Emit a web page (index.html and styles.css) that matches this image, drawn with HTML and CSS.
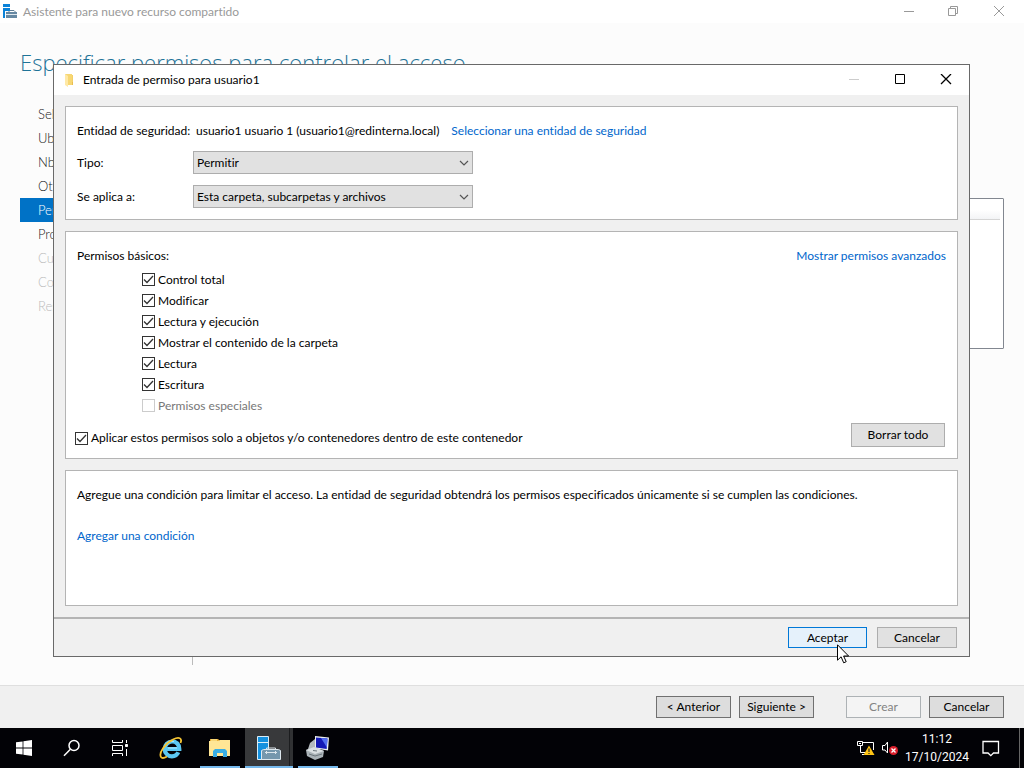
FILE: index.html
```html
<!DOCTYPE html>
<html lang="es">
<head>
<meta charset="utf-8">
<title>Asistente para nuevo recurso compartido</title>
<link rel="stylesheet" href="styles.css">
</head>
<body>
<div class="desktop">
  <main class="wizard">
    <header class="wizard-title">
      <svg class="app-icon" width="16" height="16" viewBox="0 0 16 16"><path fill="#0a82d8" d="M1 0h7v3H1zM1 4h7v3H3v7H1z"/><path fill="none" stroke="#5f7f98" d="M6 8.500l2-2h4l2 2"/><path fill="#6688a2" d="M4 8h11v6H4z"/><path stroke="#dfe8ee" d="M4 10.500h11"/></svg>
      <span class="wizard-name">Asistente para nuevo recurso compartido</span>
      <div class="window-controls">
        <button aria-label="Minimizar"><svg width="12" height="12"><path d="M1 5.500h10"/></svg></button>
        <button aria-label="Restaurar"><svg width="12" height="12"><path d="M.5 2.500h7v7h-7zM2.500 2.500v-2h7v7h-2"/></svg></button>
        <button aria-label="Cerrar"><svg width="12" height="12"><path d="M1 0l10 10M11 0l-10 10"/></svg></button>
      </div>
    </header>
    <div class="wizard-body">
      <h1>Especificar permisos para controlar el acceso</h1>
      <div class="wizard-content">
        <nav class="steps">
          <a href="#perfil">Seleccionar</a>
          <a href="#ubicacion">Ubicación</a>
          <a href="#nombre">Nbre.</a>
          <a href="#otra">Otra</a>
          <a href="#permisos" class="current">Permisos</a>
          <a href="#propiedades">Propiedades</a>
          <a href="#cuota" class="off">Cuota</a>
          <a href="#confirmacion" class="off">Confirmación</a>
          <a href="#resultados" class="off">Resultados</a>
        </nav>
        <section class="step-page"><div class="list-box"><div class="list-head"></div></div></section>
      </div>
    </div>
    <footer class="wizard-footer">
      <button>&lt; Anterior</button>
      <button>Siguiente &gt;</button>
      <button class="create" disabled>Crear</button>
      <button>Cancelar</button>
    </footer>
  </main>

  <section class="dialog" role="dialog" aria-labelledby="dialog-name">
    <header class="dialog-title">
      <svg class="folder" width="12" height="14" viewBox="0 0 12 14"><path fill="#f7d774" d="M1 1h7v11H1z"/><path fill="#e9bd50" d="M8 9h1v3H8z"/><path fill="#f3cf68" d="M8 2h1v7H8z"/><path fill="#ffe9a6" d="M1 1l3 2v11l-3-2z"/></svg>
      <span id="dialog-name">Entrada de permiso para usuario1</span>
      <div class="window-controls">
        <button aria-label="Minimizar" disabled><svg width="12" height="12"><path d="M1 5.500h10"/></svg></button>
        <button aria-label="Maximizar"><svg width="12" height="12"><path d="M1.500 .5h9v9h-9z"/></svg></button>
        <button aria-label="Cerrar"><svg width="12" height="12"><path stroke-width="1.300" d="M1 0l10 10M11 0l-10 10"/></svg></button>
      </div>
    </header>
    <div class="dialog-body">
      <div class="panel principal">
        <div class="entity"><span class="entity-label">Entidad de seguridad:</span><span>usuario1 usuario 1 (usuario1@redinterna.local)</span><a href="#entidad">Seleccionar una entidad de seguridad</a></div>
        <div class="field">
          <label for="tipo">Tipo:</label>
          <div class="combo"><select id="tipo"><option>Permitir</option></select><svg width="10" height="6"><path d="M1 1l4 4 4-4"/></svg></div>
        </div>
        <div class="field">
          <label for="ambito">Se aplica a:</label>
          <div class="combo"><select id="ambito"><option>Esta carpeta, subcarpetas y archivos</option></select><svg width="10" height="6"><path d="M1 1l4 4 4-4"/></svg></div>
        </div>
      </div>
      <div class="panel permissions">
        <div class="permissions-head"><span>Permisos básicos:</span><a href="#avanzados">Mostrar permisos avanzados</a></div>
        <div class="checks">
          <label><input type="checkbox" checked>Control total</label>
          <label><input type="checkbox" checked>Modificar</label>
          <label><input type="checkbox" checked>Lectura y ejecución</label>
          <label><input type="checkbox" checked>Mostrar el contenido de la carpeta</label>
          <label><input type="checkbox" checked>Lectura</label>
          <label><input type="checkbox" checked>Escritura</label>
          <label class="off"><input type="checkbox" disabled>Permisos especiales</label>
        </div>
        <div class="permissions-foot">
          <label><input type="checkbox" checked>Aplicar estos permisos solo a objetos y/o contenedores dentro de este contenedor</label>
          <button class="clear">Borrar todo</button>
        </div>
      </div>
      <div class="panel condition">
        <p>Agregue una condición para limitar el acceso. La entidad de seguridad obtendrá los permisos especificados únicamente si se cumplen las condiciones.</p>
        <a href="#condicion">Agregar una condición</a>
      </div>
    </div>
    <footer class="dialog-footer">
      <div class="accept-wrap">
        <button class="accept">Aceptar</button>
        <svg class="pointer" width="13" height="20" viewBox="0 0 13 20"><path fill="#fff" stroke="#000" d="M.5 .8v15.400l3.600-3.400 2.600 6 2.500-1.100-2.600-5.700h5z"/></svg>
      </div>
      <button>Cancelar</button>
    </footer>
  </section>

  <div class="taskbar">
    <button class="task" aria-label="Inicio"><svg width="16" height="16"><path fill="#fff" d="M0 2.300l6.600-.9v6.200H0zM7.400 1.300L16 0v7.600H7.400zM0 8.400h6.600v6.200L0 13.700zM7.400 8.400H16V16l-8.600-1.300z"/></svg></button>
    <button class="task" aria-label="Buscar"><svg width="18" height="18" fill="none" stroke="#fff" stroke-width="1.500"><circle cx="11" cy="6.500" r="5"/><path d="M7.400 10.200L1 16.800"/></svg></button>
    <button class="task" aria-label="Vista de tareas"><svg width="18" height="16" fill="none" stroke="#fff"><path d="M1.500 0v2.500h10V0M1.500 16v-2.500h10V16M1.500 5.500h10v5h-10zM15.500 0v3M15.500 9v7"/><path fill="#fff" d="M14.500 4.500h2v2h-2z"/></svg></button>
    <div class="apps">
      <button class="task" aria-label="Internet Explorer"><svg width="24" height="24" viewBox="0 0 24 24"><path fill="none" stroke="#5cc8f2" stroke-width="4.200" d="M6 13h14.300C20.300 8 17 5.500 13 5.500S5.700 9 5.700 13s3 7.300 7.200 7.300c3 0 5.300-1.500 6.300-4"/><path fill="none" stroke="#b6ecff" stroke-width="1.200" d="M5.500 11C7 6.500 11 4.500 15 5.500M9 12h9"/><path fill="none" stroke="#f6c534" stroke-width="1.800" d="M21.500 7C23.500 2 20 .5 14 3.500 6 7.600-.5 17 2 21c1 1.500 3.500 1 6-.5"/></svg></button>
      <button class="task open" aria-label="Explorador de archivos"><svg width="22" height="20" viewBox="0 0 22 20"><path fill="#e9ad36" d="M1 1h8l2 2H1z"/><path fill="#ffe695" d="M0 3h9l2-1h10v16H0z"/><path fill="#f8d778" d="M2 1h6v2H2z"/><path fill="#38ade3" d="M4 19v-6l2-2h10l2 2v6h-4v-4H8v4z"/></svg></button>
      <button class="task open active" aria-label="Administrador del servidor"><svg width="24" height="24" viewBox="0 0 24 24"><path fill="#1591df" stroke="#d9edf8" d="M.5 .5h11v23H.5z"/><path stroke="#d9edf8" d="M0 6.500h12"/><path fill="none" stroke="#dce6ec" d="M9.500 14v-2h9v2"/><path fill="#7597ad" stroke="#dce6ec" d="M4.500 14.500l2-1h15l2 1v9h-19z"/><path fill="none" stroke="#dce6ec" d="M8 16.500h12M9.500 15v3M18.500 15v3"/></svg></button>
      <button class="task open" aria-label="Administración de equipos"><svg width="24" height="24" viewBox="0 0 24 24"><path fill="#b4babe" d="M4 7l5-4h3v10H2z"/><path fill="#eceff0" d="M9 0l14 1.500-1 13-13-2z"/><path fill="#1419b5" d="M10 1.500l11.500 1-.8 10.500-10.700-1.500z"/><path fill="#526ef0" d="M15 2l6.500 .5-.6 9z"/><path fill="#aab2b7" d="M0 14l8-3 10 4-1 6-8 3-8-4z"/><path fill="#dbe0e3" d="M0 14l8-3 10 4-9 3z"/><path fill="none" stroke="#6c767c" d="M3 18l6 2 7-2M7 14.500l4 .5"/></svg></button>
    </div>
    <div class="tray">
      <svg width="18" height="16" fill="none" stroke="#fff"><path d="M5 2.500h11.500V10M3.500 6v6.500H9M.5 1.500h5v4h-5zM2 3.500h2M5 14.500h3"/><path fill="#ffc516" stroke="none" d="M12 5.500l5.500 9.500h-11z"/><path stroke="#222" stroke-width="1.200" d="M12 8.500v3.500M12 13v1"/></svg>
      <svg width="18" height="16" fill="none" stroke="#fff"><path d="M1.500 5.500H4L6.500 2v11L4 10H1.500z"/><circle fill="#db1f2c" stroke="none" cx="12.500" cy="10.500" r="4.500"/><path stroke-width="1.300" d="M10.500 8.500l4 4M14.500 8.500l-4 4"/></svg>
      <div class="clock"><span>11:12</span><span>17/10/2024</span></div>
      <svg class="notice" width="18" height="17" fill="none" stroke="#fff" stroke-width="1.300"><path d="M1 1.500h15.500v11.500h-5l-2.700 2.700L6 13H1z"/></svg>
      <div class="show-desktop"></div>
    </div>
  </div>
</div>
</body>
</html>
```
FILE: styles.css
```css
* { box-sizing: border-box; }
body { margin: 0; font: 12px/16px Lato, "Open Sans", sans-serif; font-variant-ligatures: none; color: #000; }
button, select { font: inherit; font-variant-ligatures: none; color: inherit; margin: 0; }
button { display: flex; align-items: center; justify-content: center; padding: 0; border: 1px solid #adadad; background: #e1e1e1; white-space: nowrap; }
a { color: #0066cc; text-decoration: none; white-space: nowrap; }
svg { display: block; flex: none; }
.desktop { position: relative; display: flex; flex-direction: column; height: 100vh; min-height: 700px; overflow: hidden; }

.wizard { flex: 1; display: flex; flex-direction: column; min-height: 0; background: #fcfcfc; }
.wizard-title { display: flex; align-items: center; height: 23px; padding: 0 3px 0 2px; background: #fff; color: #999; }
.wizard-name { margin-left: 5px; }
.window-controls { display: flex; margin-left: auto; }
.window-controls button { width: 45px; height: 23px; border: 0; background: none; }
.window-controls path { fill: none; stroke: currentColor; }
.wizard-body { flex: 1; display: flex; flex-direction: column; min-height: 0; padding: 23px 20px 20px; }
h1 { margin: 0; font: 300 22px/32px "Open Sans", "Noto Sans", sans-serif; color: #1e7398; }
.wizard-content { flex: 1; display: flex; margin-top: 24px; }
.steps { display: flex; flex-direction: column; width: 173px; border-right: 1px solid #bbb; }
.steps a { height: 24px; padding-left: 18px; font-size: 13px; font-weight: 300; line-height: 24px; color: #222; }
.steps .current { background: #0072c6; color: #fff; }
.steps .off { color: #bbb; }
.step-page { flex: 1; padding: 96px 0 0 20px; }
.list-box { height: 151px; padding: 2px 3px; border: 1px solid #828790; border-radius: 1px; background: #fff; }
.list-head { height: 19px; border-bottom: 1px solid #d5d5d5; background: linear-gradient(#fff 50%, #f3f4f6); }
.wizard-footer { display: flex; justify-content: flex-end; gap: 8px; padding: 10px 20px; border-top: 1px solid #dfdfdf; background: #f0f0f0; }
.wizard-footer button { width: 75px; height: 22px; border-color: #707070; background: #ddd; }
.wizard-footer .create { margin-left: 24px; border-color: #adb2b5; background: #f4f4f4; color: #838383; }

.dialog { position: absolute; left: 53px; right: 54px; top: 64px; border: 1px solid #696969; background: #f0f0f0; }
.dialog-title { display: flex; align-items: center; height: 30px; padding-left: 10px; background: #fff; }
.folder { margin-right: 7px; }
.dialog-title .window-controls button { width: 46px; height: 30px; }
.window-controls button:disabled { color: #ccc; }
.dialog-body { display: flex; flex-direction: column; gap: 11px; padding: 11px; }
.panel { display: flex; flex-direction: column; padding: 16px 11px 11px; border: 1px solid #b4b4b4; background: #fff; }
.principal { gap: 11px; }
.entity { display: flex; gap: 12px; margin-bottom: 1px; white-space: nowrap; }
.entity-label { width: 119px; margin-right: -12px; }
.field { display: flex; align-items: center; }
.field label { width: 116px; }
.combo { position: relative; width: 280px; }
.combo select { display: block; width: 100%; height: 23px; padding: 0 20px 0 3px; border: 1px solid #adadad; border-radius: 0; background: #e1e1e1; appearance: none; }
.combo svg { position: absolute; right: 4px; top: 9px; pointer-events: none; }
.combo path { fill: none; stroke: #555; stroke-width: 1.2; }
.permissions-head { display: flex; justify-content: space-between; }
.checks { display: flex; flex-direction: column; align-items: flex-start; margin: 5px 0 7px 65px; }
.checks label { height: 21px; }
.permissions label { display: flex; align-items: center; gap: 3px; white-space: nowrap; }
.off { color: #777; }
input { appearance: none; flex: none; width: 13px; height: 13px; margin: 0; border: 1px solid #333; background: #fff; }
input:checked { background: #fff url("data:image/svg+xml,%3Csvg xmlns='http://www.w3.org/2000/svg' width='11' height='11'%3E%3Cpath d='M1 5.500l3 3 6-6.500' fill='none' stroke='%23333' stroke-width='1.300'/%3E%3C/svg%3E") center no-repeat; }
input:disabled { border-color: #ccc; }
.permissions-foot { display: flex; align-items: flex-end; justify-content: space-between; margin-left: -2px; }
.permissions-foot label { height: 18px; }
.clear { width: 94px; height: 24px; margin-right: 1px; }
.condition { align-items: flex-start; gap: 25px; padding-bottom: 61px; }
.condition p { margin: 0; white-space: nowrap; }
.dialog-footer { display: flex; justify-content: flex-end; gap: 10px; padding: 8px 12px; border-top: 2px solid #b4b4b4; }
.dialog-footer button { width: 80px; height: 21px; }
.accept-wrap { position: relative; }
.dialog-footer .accept { width: 79px; border-color: #0078d7; background: #e5f1fb; }
.pointer { position: absolute; left: 49px; top: 17px; }

.taskbar { display: flex; height: 40px; background: #020206; color: #fff; }
.task { width: 48px; height: 40px; border: 0; background: none; }
.apps { display: flex; gap: 1px; margin-left: 3px; }
.open { background: linear-gradient(#76b9ed, #76b9ed) bottom / 40px 2px no-repeat; }
.active { background: linear-gradient(#76b9ed, #76b9ed) bottom / 100% 2px no-repeat, linear-gradient(90deg, #38393b 44px, #1c1d1f 44px, #1c1d1f 45px, #303133 45px); }
.tray { display: flex; align-items: center; gap: 6px; margin-left: auto; }
.clock { display: flex; flex-direction: column; align-items: center; width: 64px; font-family: Roboto, sans-serif; line-height: 18px; }
.notice { margin-left: 7px; }
.show-desktop { width: 5px; height: 40px; margin-left: 13px; border-left: 1px solid #666; }
```
